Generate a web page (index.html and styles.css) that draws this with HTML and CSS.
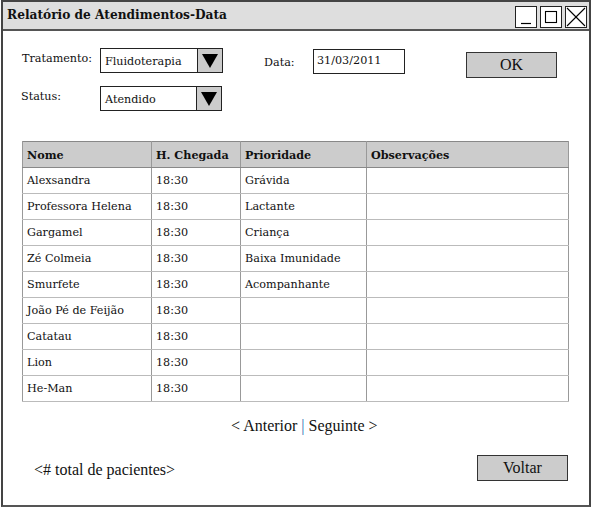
FILE: index.html
```html
<!DOCTYPE html>
<html>
<head>
<meta charset="utf-8">
<link rel="stylesheet" href="styles.css">
</head>
<body>
<div class="window">
  <div class="titlebar">
    <span class="title">Relatório de Atendimentos-Data</span>
    <div class="controls">
      <div class="ctl"><svg width="20" height="20" viewBox="0 0 20 20"><line x1="5" y1="16.5" x2="15" y2="16.5" stroke="#000" stroke-width="1.2"/></svg></div>
      <div class="ctl"><svg width="20" height="20" viewBox="0 0 20 20"><rect x="4.5" y="4.5" width="11" height="11" fill="none" stroke="#000" stroke-width="1.1"/></svg></div>
      <div class="ctl"><svg width="20" height="20" viewBox="0 0 20 20"><line x1="1" y1="1" x2="19" y2="19" stroke="#000" stroke-width="1.1"/><line x1="19" y1="1" x2="1" y2="19" stroke="#000" stroke-width="1.1"/></svg></div>
    </div>
  </div>
  <div class="content">
    <div class="row row1">
      <span class="label lbl-trat">Tratamento:</span>
      <div class="select sel1">
        <span class="sel-text">Fluidoterapia</span>
        <span class="sel-btn"><svg width="16" height="14" viewBox="0 0 16 14"><polygon points="0,0 16,0 8,14" fill="#000"/></svg></span>
      </div>
      <span class="label lbl-data">Data:</span>
      <div class="input">31/03/2011</div>
      <div class="button btn-ok">OK</div>
    </div>
    <div class="row row2">
      <span class="label lbl-status">Status:</span>
      <div class="select sel2">
        <span class="sel-text">Atendido</span>
        <span class="sel-btn"><svg width="16" height="14" viewBox="0 0 16 14"><polygon points="0,0 16,0 8,14" fill="#000"/></svg></span>
      </div>
    </div>
    <table class="grid">
      <colgroup><col class="c1"><col class="c2"><col class="c3"><col class="c4"></colgroup>
      <thead>
        <tr><th>Nome</th><th>H. Chegada</th><th>Prioridade</th><th>Observações</th></tr>
      </thead>
      <tbody>
        <tr><td>Alexsandra</td><td>18:30</td><td>Grávida</td><td></td></tr>
        <tr><td>Professora Helena</td><td>18:30</td><td>Lactante</td><td></td></tr>
        <tr><td>Gargamel</td><td>18:30</td><td>Criança</td><td></td></tr>
        <tr><td>Zé Colmeia</td><td>18:30</td><td>Baixa Imunidade</td><td></td></tr>
        <tr><td>Smurfete</td><td>18:30</td><td>Acompanhante</td><td></td></tr>
        <tr><td>João Pé de Feijão</td><td>18:30</td><td></td><td></td></tr>
        <tr><td>Catatau</td><td>18:30</td><td></td><td></td></tr>
        <tr><td>Lion</td><td>18:30</td><td></td><td></td></tr>
        <tr><td>He-Man</td><td>18:30</td><td></td><td></td></tr>
      </tbody>
    </table>
    <div class="pager">&lt; Anterior <span class="pipe">|</span> Seguinte &gt;</div>
    <div class="footer">
      <span class="total">&lt;# total de pacientes&gt;</span>
      <div class="button btn-voltar">Voltar</div>
    </div>
  </div>
</div>
</body>
</html>
```
FILE: styles.css
```css
* { box-sizing: border-box; }
html, body { margin: 0; padding: 0; background: #fff; }
body { font-family: "DejaVu Serif", serif; font-size: 11.2px; color: #111; }

.window {
  margin-left: 1px;
  width: 590px;
  height: 507px;
  border: 2px solid #444;
  border-bottom-color: #555;
  background: #fff;
}

.titlebar {
  height: 29px;
  background: #dedede;
  border-bottom: 2px solid #555;
  display: flex;
  align-items: center;
  justify-content: space-between;
}
.title {
  font-weight: bold;
  font-size: 12.2px;
  padding-left: 4px;
  padding-bottom: 1px;
  color: #111;
}
.controls { display: flex; gap: 3px; margin-right: 2px; margin-top: 2px; }
.ctl {
  width: 22px; height: 22px;
  border: 1px solid #222;
  background: #fff;
  display: flex; align-items: center; justify-content: center;
}

.row { display: flex; align-items: flex-start; }
.row1 { margin-top: 17px; height: 25px; }
.row2 { margin-top: 13px; height: 25px; }

.label { line-height: 13px; padding-top: 4px; }
.lbl-trat { margin-left: 19px; width: 78px; }
.lbl-status { margin-left: 18px; width: 79px; padding-top: 4px; }
.lbl-data { margin-left: 41px; width: 49px; padding-top: 8px; }

.select {
  display: flex;
  height: 25px;
  border: 1.5px solid #222;
  background: #fff;
}
.sel1 { width: 123px; }
.sel2 { width: 122px; }
.sel-text { flex: 1; padding-left: 4px; display: flex; align-items: center; padding-top: 1px; }
.sel-btn {
  width: 25px;
  background: #cccccc;
  border-left: 1.5px solid #222;
  display: flex; align-items: center; justify-content: center;
}

.input {
  width: 92px; height: 25px;
  margin-top: 1px;
  border: 1.5px solid #222;
  background: #fff;
  padding-left: 3px;
  padding-top: 4px;
  line-height: 13px;
}

.button {
  font-family: "Liberation Serif", serif;
  font-size: 16px;
  background: #cccccc;
  border: 1.5px solid #333;
  display: flex; align-items: center; justify-content: center;
  color: #111;
}
.btn-ok { margin-left: 61px; margin-top: 4px; width: 91px; height: 26px; }

.grid {
  margin-top: 30px;
  margin-left: 19px;
  width: 546px;
  border-collapse: collapse;
  table-layout: fixed;
  border: 1px solid #888;
}
.c1 { width: 129px; }
.c2 { width: 89px; }
.c3 { width: 126px; }
.c4 { width: 202px; }
.grid th, .grid td {
  height: 26px;
  padding: 0 0 0 4px;
  text-align: left;
  white-space: nowrap;
  vertical-align: middle;
  border-left: 1px solid #999;
  border-right: 1px solid #999;
  border-bottom: 1px solid #bbb;
  font-size: 11.2px;
}
.grid th {
  background: #cccccc;
  font-weight: bold;
  border-bottom: 1px solid #888;
  padding-top: 1px;
}
.grid td { padding-top: 0; }

.pager {
  font-family: "Liberation Serif", serif;
  font-size: 16px;
  line-height: 18px;
  margin-top: 15px;
  padding-left: 228px;
  color: #111;
}
.pipe { color: #2b6cb0; }

.footer {
  display: flex;
  align-items: center;
  margin-top: 20px;
  height: 26px;
}
.total {
  font-family: "Liberation Serif", serif;
  font-size: 16px;
  margin-left: 31px;
  padding-top: 4px;
}
.btn-voltar { margin-left: auto; margin-right: 21px; width: 91px; height: 26px; }
```
